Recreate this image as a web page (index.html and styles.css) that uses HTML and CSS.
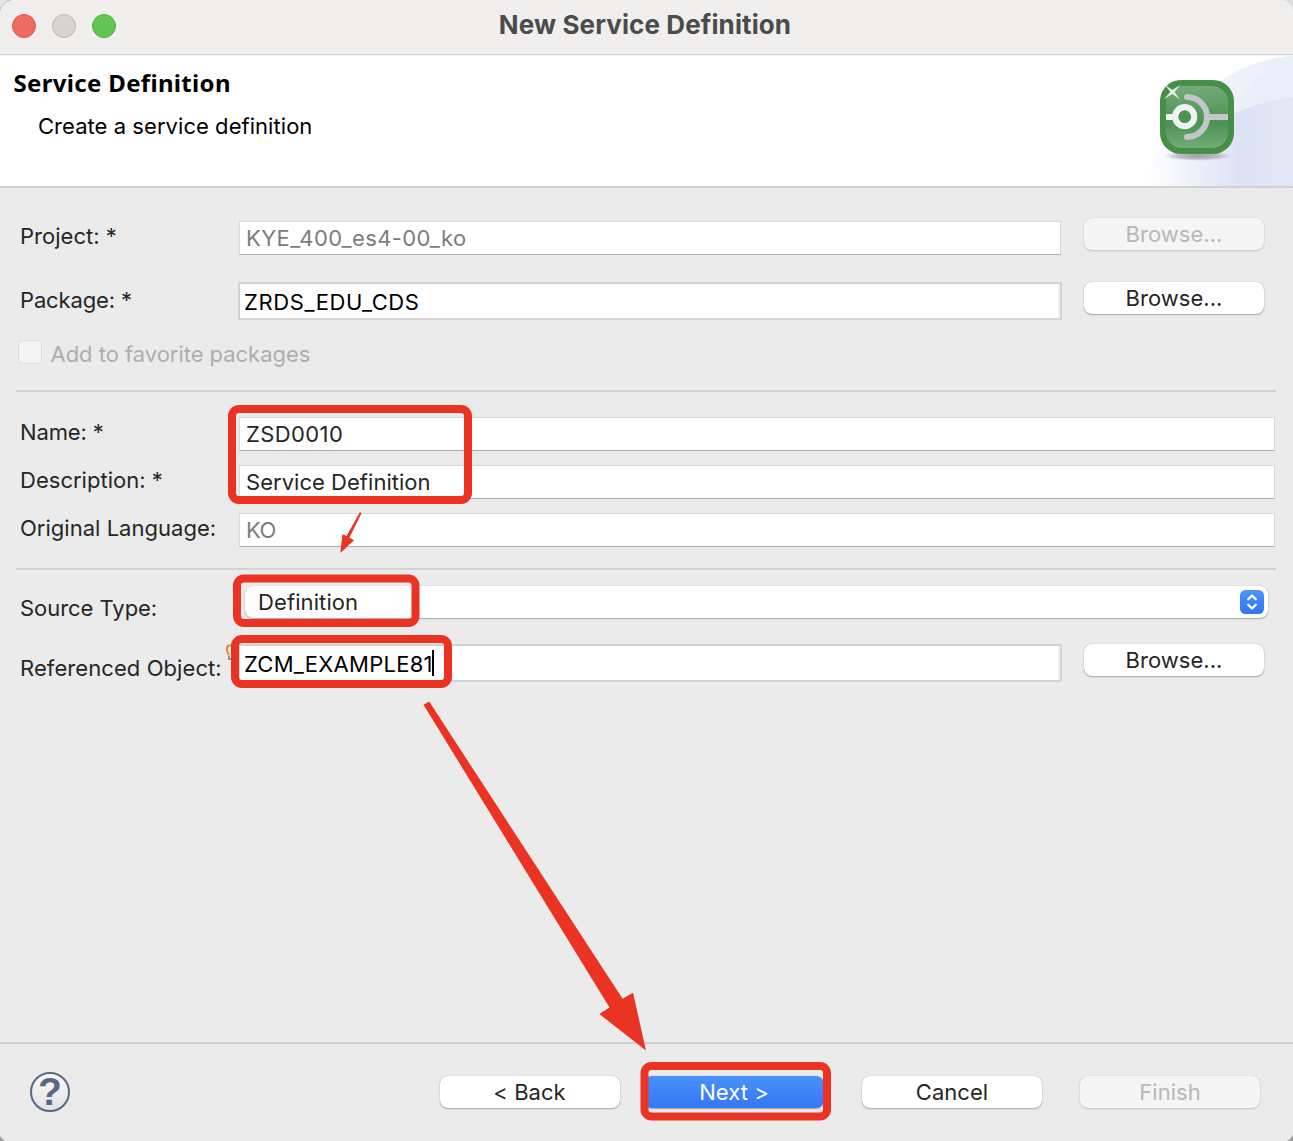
FILE: index.html
```
<!DOCTYPE html>
<html lang="en">
<head>
<meta charset="utf-8">
<title>New Service Definition</title>
<link rel="stylesheet" href="styles.css">
</head>
<body>
<div class="window">
  <header class="titlebar">
    <div class="lights">
      <span class="light close"></span>
      <span class="light minimize"></span>
      <span class="light zoom"></span>
    </div>
    <h1 class="window-title">New Service Definition</h1>
  </header>

  <section class="banner">
    <div class="banner-text">
      <h2>Service Definition</h2>
      <p>Create a service definition</p>
    </div>
    <svg class="banner-art" viewBox="1143 56 150 130" width="150" height="130">
      <defs>
        <linearGradient id="swoosh" x1="0" x2="1" y1="0" y2="0">
          <stop offset="0" stop-color="#fff"/><stop offset=".65" stop-color="#dde2f4"/><stop offset="1" stop-color="#e4e8f6"/>
        </linearGradient>
        <linearGradient id="swoosh2" x1="0" x2="1" y1="0" y2="0">
          <stop offset="0" stop-color="#fcfdff"/><stop offset=".4" stop-color="#f1f4fc"/><stop offset="1" stop-color="#eaeef9"/>
        </linearGradient>
        <linearGradient id="tile" x1="0" x2="0" y1="0" y2="1">
          <stop offset="0" stop-color="#74aa78"/><stop offset=".6" stop-color="#4c9252"/><stop offset="1" stop-color="#74ac78"/>
        </linearGradient>
        <radialGradient id="shade">
          <stop offset="0" stop-color="#8d8d95" stop-opacity=".85"/><stop offset=".6" stop-color="#9d9da5" stop-opacity=".6"/><stop offset="1" stop-color="#bbb" stop-opacity="0"/>
        </radialGradient>
      </defs>
      <path d="M1147 186C1158 130 1210 66 1288 56H1293V186Z" fill="url(#swoosh2)"/>
      <path d="M1293 57C1262 68 1244 88 1233 115V186H1293Z" fill="#e8edf9" opacity=".8"/>
      <path d="M1147 186C1160 152 1180 135 1233 114Q1262 101 1293 97V186Z" fill="url(#swoosh)"/>
      <ellipse cx="1197.500" cy="156" rx="35" ry="5" fill="url(#shade)"/>
      <rect x="1160" y="80" width="74" height="74" rx="21" fill="#468f49"/>
      <rect x="1166" y="86" width="62" height="62" rx="16" fill="url(#tile)"/>
      <path d="M1187 97a20 20 0 0 1 0 40M1207 117h21" fill="none" stroke="#c3c6cc" stroke-width="6"/>
      <circle cx="1187" cy="97" r="3" fill="#c3c6cc"/><circle cx="1187" cy="137" r="3" fill="#c3c6cc"/>
      <path d="M1166 117h9" stroke="#f0f1f0" stroke-width="6"/>
      <circle cx="1184.700" cy="116.700" r="9.500" fill="#4c9252" stroke="#f0f1f0" stroke-width="6.200"/>
      <path d="M1164.500 84.500L1172.500 90L1180.500 85L1174.500 92L1180 99.500L1172.500 94L1164 99L1170.500 92Z" fill="#e4f2dd"/>
    </svg>
  </section>

  <main class="form">
    <div class="row project">
      <label>Project: *</label>
      <div class="field disabled short"><span class="wide">KYE_400_es4-00_ko</span></div>
      <button class="btn" disabled>Browse...</button>
    </div>
    <div class="row package">
      <label class="tight">Package: *</label>
      <div class="field styled"><span class="wider">ZRDS_EDU_CDS</span></div>
      <button class="btn">Browse...</button>
    </div>
    <div class="row favorite">
      <span class="checkbox"></span>
      <span class="favorite-label">Add to favorite packages</span>
    </div>
    <hr>
    <div class="group">
      <div class="row">
        <label class="tight">Name: *</label>
        <div class="field"><span class="wide">ZSD0010</span></div>
      </div>
      <div class="row">
        <label>Description: *</label>
        <div class="field"><span>Service Definition</span></div>
      </div>
      <div class="row">
        <label>Original Language:</label>
        <div class="field disabled"><span class="tight">KO</span></div>
      </div>
    </div>
    <hr>
    <div class="row source">
      <label>Source Type:</label>
      <div class="select">
        <span>Definition</span>
        <svg width="24" height="24" viewBox="0 0 24 24">
          <defs><linearGradient id="blue" x1="0" x2="0" y1="0" y2="1"><stop offset="0" stop-color="#4a94f8"/><stop offset="1" stop-color="#3176f6"/></linearGradient></defs>
          <rect width="24" height="24" rx="5.500" fill="url(#blue)"/>
          <path d="M8.200 9.300L12 5.500L15.800 9.300M8.200 14.700L12 18.500L15.800 14.700" fill="none" stroke="#fff" stroke-width="2.300" stroke-linecap="round" stroke-linejoin="round"/>
        </svg>
      </div>
    </div>
    <div class="row reference">
      <label>Referenced Object:</label>
      <div class="field styled"><span class="object-name">ZCM_EXAMPLE81</span><i class="caret"></i></div>
      <button class="btn">Browse...</button>
    </div>
  </main>

  <footer class="footer">
    <span class="help">?</span>
    <div class="actions">
      <button class="btn back">&lt; Back</button>
      <button class="btn primary">Next &gt;</button>
      <button class="btn cancel">Cancel</button>
      <button class="btn" disabled>Finish</button>
    </div>
  </footer>

  <svg class="annotations" viewBox="0 0 1293 1141" width="1293" height="1141">
    <path d="M0 0H11Q2 2 0 11Z" fill="#e3e6ee"/>
    <path d="M0 10.500Q2 2 10.500 0" fill="none" stroke="#bfc0c4"/>
    <path d="M1293 0H1283Q1291 2 1293 10Z" fill="#dcdde0"/>
    <path d="M0 1136Q2 1139 5 1141H0ZM1293 1135Q1291 1139 1287 1141H1293Z" fill="#9c9c9c"/>
    <g fill="none">
      <path d="M232 645.500h-3.500q-2 1-1.500 5l2 5" stroke="#d98b3a" stroke-width="2"/>
      <path d="M229 656v3h3" stroke="#8e93a3" stroke-width="2"/>
    </g>
    <g fill="none" stroke="#eb3323" stroke-width="8">
      <rect x="232" y="409" width="236" height="91" rx="7"/>
      <rect x="237" y="578.500" width="178.500" height="44.500" rx="7"/>
      <rect x="235" y="639" width="213" height="45" rx="7"/>
      <rect x="644.500" y="1066" width="182.500" height="50.500" rx="7"/>
    </g>
    <g fill="#eb3323">
      <path d="M360 512L361.500 513.200L349.500 537.500L354 540.200L340.300 553L342.500 534.300L346.500 536Z"/>
      <path d="M423.500 704.700L429.200 701.600L622.600 998.800L633 992.700L646 1050.500L599.300 1014L609.500 1007.500Z"/>
    </g>
  </svg>
</div>
</body>
</html>
```
FILE: styles.css
```
* { box-sizing: border-box; }

body {
  margin: 0;
  font: 22px/24px Inter, "Liberation Sans", sans-serif;
  color: #262626;
}

.window {
  position: relative;
  display: flex;
  flex-direction: column;
  width: 1293px;
  height: 1141px;
  overflow: hidden;
  background: #ebebeb;
}

/* title bar */
.titlebar {
  display: grid;
  grid-template-columns: 200px 1fr 203px;
  height: 56px;
  background: #f0efee;
  border-bottom: 1px solid #f3f3f3;
  box-shadow: inset 0 -1px #d4d4d6;
}
.lights { display: flex; gap: 16px; padding: 14px 0 0 12px; }
.light { width: 24px; height: 24px; border-radius: 50%; border: 1px solid; }
.close { background: #ed6b60; border-color: #dc5a50; }
.minimize { background: #d6d5d4; border-color: #bbbab9; }
.zoom { background: #62c655; border-color: #55b047; }
.window-title {
  margin: 0;
  padding-top: 11px;
  text-align: center;
  font-size: 26px;
  line-height: 28px;
  letter-spacing: .1px;
  color: #4b4b4b;
}

/* banner */
.banner {
  display: flex;
  justify-content: space-between;
  height: 132px;
  background: #fff;
  border-bottom: 2px solid #d2d2d2;
  color: #000;
}
.banner-text { padding: 11px 0 0 13.5px; }
.banner h2 {
  margin: 0;
  font: 700 24px/32px "Noto Sans", "Open Sans", sans-serif;
  letter-spacing: .33px;
}
.banner p { margin: 15px 0 0 24.5px; letter-spacing: .05px; }

/* form */
.form { flex: 1; padding-top: 30px; }
.form hr { height: 2px; margin: 0 17px 0 16px; border: 0; background: #d2d2d2; }
.row { display: grid; grid-template-columns: 239px 822px 1fr; align-items: start; }
.row label { padding: 3px 0 0 20px; letter-spacing: .02px; white-space: nowrap; }
.row label.tight { letter-spacing: -.15px; }
.wide { letter-spacing: .4px; }
.wider { letter-spacing: .6px; }
.tight { letter-spacing: -.5px; }

.field {
  display: flex;
  height: 34px;
  padding: 4px 0 0 6px;
  background: #fff;
  border: 1px solid #d9d9d9;
  border-bottom-color: #ababab;
}
.field.disabled { color: #7c7c7c; }
.field.styled {
  width: 824px;
  height: 38px;
  margin-left: -1px;
  padding: 6px 0 0 4px;
  border: 2px solid #d2d2d2;
  box-shadow: inset -2px 0 #f0f0f0;
  color: #000;
}
.object-name { letter-spacing: .26px; }
.caret { width: 2px; height: 26px; margin: -2px 0 0 -1px; background: #000; }

.btn {
  width: 180px;
  height: 32px;
  padding: 0;
  border: 0;
  border-radius: 8px;
  background: #fff;
  box-shadow: 0 0 1px rgba(0,0,0,.3), 0 1px 1.5px rgba(0,0,0,.28);
  font: inherit;
  letter-spacing: .04px;
  color: #262626;
}
.btn:disabled { background: #f5f5f5; color: #b7b7b7; box-shadow: 0 0 1px rgba(0,0,0,.2), 0 1px 2px rgba(0,0,0,.14); }
.row .btn { margin-left: 23px; }

.project { height: 64px; }
.project label, .package label { padding-top: 6px; }
.project .field { margin-top: 3px; }
.package { height: 58px; }

.favorite { display: flex; height: 50px; padding-left: 18px; color: #aeaeae; }
.checkbox {
  width: 24px;
  height: 24px;
  background: #f4f4f4;
  border: 1px solid #dcdcdc;
  border-radius: 5px;
}
.favorite-label { padding: 2px 0 0 8.5px; letter-spacing: -.03px; }

.group { display: grid; gap: 14px; padding: 25px 0 21px; }
.group .row { grid-template-columns: 239px 1036px; }
.group .field { letter-spacing: .03px; }

.source { height: 74px; padding-top: 16px; grid-template-columns: 245px 1023px; }
.source label { padding-top: 10px; letter-spacing: -.04px; }
.select {
  display: flex;
  justify-content: space-between;
  height: 32px;
  padding: 4px 4px 0 13px;
  border-radius: 8px;
  background: #fff;
  box-shadow: 0 0 1px rgba(0,0,0,.3), 0 1px 1.5px rgba(0,0,0,.28);
  letter-spacing: .1px;
}
.reference label { padding-top: 12px; letter-spacing: .08px; }

/* button bar */
.footer {
  display: flex;
  justify-content: space-between;
  height: 99px;
  padding: 28px 33px 0 30px;
  border-top: 2px solid #d2d2d2;
}
.help {
  width: 40px;
  height: 40px;
  border: 2px solid #58688a;
  border-radius: 50%;
  background: linear-gradient(#fafafa, #e2e2e2);
  text-align: center;
  font: 700 39px/36px "Liberation Sans", sans-serif;
  color: #58688a;
}
.actions { display: flex; padding-top: 4px; }
.back { margin-right: 24px; padding-right: 1px; }
.primary { margin-right: 38px; background: linear-gradient(#4a91f8, #3377f6); color: #fff; letter-spacing: .05px; }
.cancel { margin-right: 38px; }

.annotations { position: absolute; inset: 0; pointer-events: none; }
```
